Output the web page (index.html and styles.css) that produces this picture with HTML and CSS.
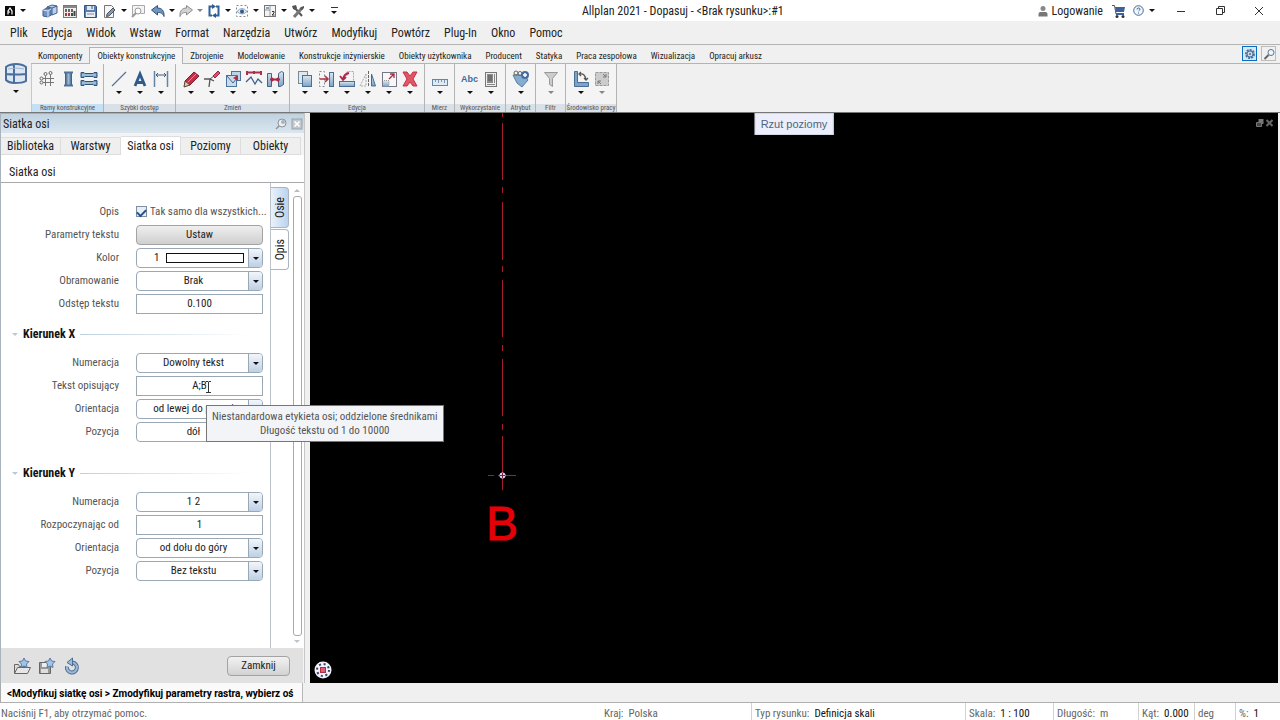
FILE: index.html
```html
<!DOCTYPE html>
<html lang="pl">
<head>
<meta charset="utf-8">
<title>Allplan 2021 - Dopasuj</title>
<link rel="stylesheet" href="styles.css">
</head>
<body>
<svg class="defs" aria-hidden="true">
  <defs>
    <linearGradient id="steel" x1="0" y1="0" x2="0" y2="1"><stop offset="0" stop-color="#dbe8f2"/><stop offset="1" stop-color="#7da3c4"/></linearGradient>
    <linearGradient id="deep" x1="0" y1="0" x2="1" y2="0"><stop offset="0" stop-color="#2f567f"/><stop offset=".5" stop-color="#9dbbd6"/><stop offset="1" stop-color="#2f567f"/></linearGradient>
  </defs>
</svg>

<header class="titlebar">
  <div class="quick">
    <button class="logo" aria-label="Allplan"><svg width="10" height="10"><rect width="10" height="10" fill="#0a0a0a"/><path d="M3 8.500V5l2-3 2 3v3.500M3.500 6H5" fill="none" stroke="#fff" stroke-width="1.200"/></svg><i class="car"></i></button>
    <button class="q first" aria-label="Projekt"><svg width="16" height="16"><path d="M5 4l5-2 5 1v7l-5 2-5-1z" fill="#b9d0e6" stroke="#3c5f92"/><path d="M5 4l5 1 5-2M10 5v7" fill="none" stroke="#3c5f92"/><path d="M1 7l4-2 4 1v6l-3 2-5-1z" fill="#6f93c4" stroke="#3c5f92"/><path d="M1 7l5 1 3-2M6 8v7" fill="none" stroke="#d5e3f2"/></svg></button>
    <button class="q" aria-label="Rysunki"><svg width="16" height="16"><rect x="1.500" y="2.500" width="13" height="12" fill="#eee" stroke="#777"/><path d="M2 4h12" stroke="#888" stroke-width="2"/><path d="M4 6v3M7 6v3M10 6v3" stroke="#666" stroke-width="2"/><path d="M4 10v3M7 10v3" stroke="#a33b3b" stroke-width="2"/><path d="M10 10v3M12.500 8v5" stroke="#444" stroke-width="2"/></svg></button>
    <button class="q" aria-label="Zapisz"><svg width="16" height="16"><path d="M2.500 2.500h11l1 1v11h-12z" fill="#5c80ab" stroke="#34547d"/><rect x="5" y="3" width="7" height="4" fill="#dce7f2"/><rect x="4" y="9" width="9" height="5" fill="#e8eef5"/><path d="M5 11h7" stroke="#88a"/><path d="M10 3v3" stroke="#34547d"/></svg></button>
    <button class="q wide" aria-label="Nowy"><svg width="16" height="16"><path d="M2.500 2.500h7l2 2v10h-9z" fill="#f6f6f6" stroke="#777"/><path d="M5 11l6-6 2 2-6 6-2.500.5z" fill="#7d9cc0" stroke="#333" stroke-width=".8"/></svg><i class="car"></i></button>
    <button class="q" aria-label="Podgląd"><svg width="16" height="16"><path d="M2.500 12.500v-10h12v8h-4" fill="#f4f4f4" stroke="#aaa"/><circle cx="8" cy="8" r="3" fill="#fff" stroke="#999"/><path d="M6 10l-4 4" stroke="#999" stroke-width="2"/></svg></button>
    <button class="q wide" aria-label="Cofnij"><svg width="16" height="16"><path d="M1.500 7l6-4.500V5c4 0 7 2.500 6.500 8.500-1.500-3.500-3-4-6.500-4v2.500z" fill="#6f94c0" stroke="#31547f"/></svg><i class="car"></i></button>
    <button class="q wide" aria-label="Ponów"><svg width="16" height="16"><path d="M14.500 7l-6-4.500V5c-4 0-7 2.500-6.500 8.500 1.500-3.500 3-4 6.500-4v2.500z" fill="#d2d2d2" stroke="#8c8c8c"/></svg><i class="car dim"></i></button>
    <button class="q wide" aria-label="Odśwież"><svg width="16" height="16"><path d="M6 3.500H3.500v9H6M10 3.500h2.500v9H10" fill="none" stroke="#2e6299" stroke-width="2"/><path d="M6 1l4 2.500L6 6zM10 10l-4 2.500 4 2.500z" fill="#2e5c91"/></svg><i class="car"></i></button>
    <button class="q wide" aria-label="Widoczność"><svg width="16" height="16"><rect x="2.500" y="2.500" width="11" height="11" fill="none" stroke="#888" stroke-dasharray="2 2"/><path d="M3 8.500q5-6 10 0q-5 5-10 0z" fill="#dfeaf5" stroke="#8ba6c3"/><circle cx="8" cy="8.500" r="2" fill="#2e578b"/></svg><i class="car"></i></button>
    <button class="q wide" aria-label="Okna"><svg width="16" height="16"><rect x="2.500" y="2.500" width="11" height="11" fill="#f3f3f3" stroke="#777"/><path d="M8 3v10M3 7h5" stroke="#999"/><path d="M4 4h3v2H4z" fill="#85a5c8"/><path d="M10 8.500h2v1.500l-2 2h2.500" fill="none" stroke="#333"/></svg><i class="car"></i></button>
    <button class="q wide" aria-label="Opcje"><svg width="16" height="16"><path d="M4 4l8 9" stroke="#555" stroke-width="2"/><path d="M2 3l4-1 1 3-2 2-2-1z" fill="#555"/><path d="M12 5l-8 9" stroke="#777" stroke-width="3"/><path d="M14 3l-3 1-1 2 2 1 2-2z" fill="#555"/></svg><i class="car"></i></button>
    <button class="q more" aria-label="Więcej"><span></span><i class="car"></i></button>
  </div>
  <div class="apptitle">Allplan 2021 - Dopasuj - &lt;Brak rysunku&gt;:#1</div>
  <div class="account">
    <button class="login"><svg width="10" height="12"><circle cx="5" cy="3.500" r="2.500" fill="#888"/><path d="M.5 11.500V9q0-2 2-2h5q2 0 2 2v2.500z" fill="#777"/></svg>Logowanie</button>
    <button aria-label="Sklep"><svg width="14" height="14"><path d="M0 1.500h2.500L4 10h8" fill="none" stroke="#555"/><path d="M3 3h10l-1 5H4z" fill="#3e619c"/><path d="M4 9h8v2H4z" fill="#3e619c"/><circle cx="5" cy="12.500" r="1.500" fill="#333"/><circle cx="11" cy="12.500" r="1.500" fill="#333"/></svg></button>
    <button class="help" aria-label="Pomoc"><svg width="11" height="11"><circle cx="5.500" cy="5.500" r="4.800" fill="#f2f7fc" stroke="#45699f"/><path d="M4 4.500q0-1.500 1.500-1.500t1.500 1.300q0 .7-1.500 1.700M5.500 7.500v1" fill="none" stroke="#365b93"/></svg><i class="car"></i></button>
  </div>
  <div class="winbtns">
    <button aria-label="Minimalizuj"><svg width="10" height="10"><path d="M1 5.500h8" stroke="#333"/></svg></button>
    <button aria-label="Przywróć"><svg width="10" height="10"><path d="M1.500 2.500h6v6h-6zM3.500 2.500v-2h6v6h-2" fill="none" stroke="#333"/></svg></button>
    <button aria-label="Zamknij okno"><svg width="10" height="10"><path d="M1 1l8 8M9 1l-8 8" stroke="#333"/></svg></button>
  </div>
</header>

<nav class="menubar">
  <button>Plik</button><button>Edycja</button><button>Widok</button><button>Wstaw</button><button>Format</button><button>Narzędzia</button><button>Utwórz</button><button>Modyfikuj</button><button>Powtórz</button><button>Plug-In</button><button>Okno</button><button>Pomoc</button>
</nav>

<section class="ribbon">
  <button class="role" aria-label="Rola"><svg width="24" height="24"><path d="M2 4l8-2 12 3v15H10l-8-2z" fill="#dce7f1"/><path d="M2 5q4-3 10-3t10 3v14q-3 2-12 2-5 0-8-3zM10 3v18M2 12q8 1 20 0" fill="none" stroke="#4a6f9e" stroke-width="2"/><path d="M4 7q8-2 16 0" fill="none" stroke="#9db6d0"/></svg><i class="car"></i></button>
  <div class="ribbon-body">
    <div class="tabs">
      <button>Komponenty</button><button class="on">Obiekty konstrukcyjne</button><button>Zbrojenie</button><button>Modelowanie</button><button>Konstrukcje inżynierskie</button><button>Obiekty użytkownika</button><button>Producent</button><button>Statyka</button><button>Praca zespołowa</button><button>Wizualizacja</button><button>Opracuj arkusz</button>
      <span class="tabtools">
        <button class="tool sel" aria-label="Konfiguruj"><svg width="12" height="12"><circle cx="6" cy="6" r="4" fill="#b9cfe3" stroke="#49719a" stroke-width="2" stroke-dasharray="2 1"/><circle cx="6" cy="6" r="3" fill="#c6d8e8" stroke="#49719a"/><circle cx="6" cy="6" r="1" fill="#49719a"/></svg></button>
        <button class="tool" aria-label="Szukaj"><svg width="12" height="12"><circle cx="8" cy="4.500" r="3" fill="#eef5fb" stroke="#55758f"/><path d="M5.500 7L1.500 11" stroke="#666" stroke-width="2"/></svg></button>
      </span>
    </div>
    <div class="groups">
      <div class="group hot"><div class="icons">
        <button aria-label="Siatka osi"><svg width="18" height="18"><path d="M7.500 6v10M12.500 3v13M5 8.500h11M5 12.500h11" stroke="#777" stroke-width="1"/><g fill="#f5f5f5" stroke="#666"><circle cx="7.500" cy="4" r="1.500"/><circle cx="12.500" cy="3" r="1.500"/><circle cx="3.500" cy="8.500" r="1.500"/><circle cx="3.500" cy="12.500" r="1.500"/></g></svg></button>
        <button aria-label="Słup"><svg width="18" height="18"><rect x="6" y="3" width="7" height="12" fill="url(#deep)"/><path d="M5 1.500h9v2H5zM5 14.500h9v2H5z" fill="#4f7399"/></svg></button>
        <button aria-label="Belka"><svg width="18" height="18"><g fill="#6f97bd" stroke="#2f5379"><path d="M1 2.500h3l1 1h8l1-1h3v5h-3l-1-1H5l-1 1H1z"/><path d="M1 10.500h3l1 1h8l1-1h3v5h-3l-1-1H5l-1 1H1z"/></g><path d="M2 5h14M2 13h14" stroke="#cfe0ee"/></svg></button>
      </div><div class="glabel">Ramy konstrukcyjne</div></div>
      <div class="group"><div class="icons">
        <button aria-label="Linia"><svg width="18" height="18"><path d="M2 16L16 2" stroke="#5a7396" stroke-width="1.300"/></svg><i class="car"></i></button>
        <button aria-label="Tekst"><svg width="18" height="18"><path d="M4 16L9 4l5 12M6 12.500h6" fill="none" stroke="#2f5a8c" stroke-width="2.800"/></svg><i class="car"></i></button>
        <button aria-label="Wymiar"><svg width="18" height="18"><path d="M2.500 1v16" stroke="#6385ab" stroke-width="1.500"/><path d="M15.500 1v16" stroke="#6385ab" stroke-width="1.500"/><path d="M4 5h10M6 3L4 5l2 2M12 3l2 2-2 2" fill="none" stroke="#445a78"/></svg><i class="car"></i></button>
      </div><div class="glabel">Szybki dostęp</div></div>
      <div class="group"><div class="icons">
        <button aria-label="Edytuj"><svg width="18" height="18"><path d="M12 2l5 4-9 9-5-4z" fill="#c22f48" stroke="#84182c"/><path d="M14 4L5 13" stroke="#ea8a99"/><path d="M3 11l5 4-6 2z" fill="#e6c79b" stroke="#50403b"/></svg><i class="car"></i></button>
        <button aria-label="Usuń fragment"><svg width="18" height="18"><path d="M1 9h6l4 2M7 9l-1 8" fill="none" stroke="#555" stroke-width="1.300"/><path d="M7 9l4-3" stroke="#555"/><path d="M10 6l5-5 2 2-5 5z" fill="#d2516a" stroke="#a02640"/></svg><i class="car"></i></button>
        <button aria-label="Punkty"><svg width="18" height="18"><rect x="7.500" y="1.500" width="9" height="9" fill="#bdd3e6" stroke="#4d7299"/><rect x="2.500" y="5.500" width="10" height="11" fill="#c9dcec" stroke="#4d7299"/><path d="M3 6l6 7 4-5" fill="none" stroke="#44658b"/><path d="M9 8l5-3v6z" fill="#b52a47"/></svg><i class="car"></i></button>
        <button aria-label="Polilinia"><svg width="18" height="18"><path d="M2 2.500h14" stroke="#aa3049" stroke-width="2"/><path d="M2 1v4M9 1v3M16 1v4" stroke="#aa3049" stroke-width="2"/><path d="M1 12l5-5 4 7 3-5 4 4" fill="none" stroke="#415f88" stroke-width="1.300"/></svg><i class="car"></i></button>
        <button aria-label="Połącz"><svg width="18" height="18"><path d="M1.500 3.500h4v13h-4zM12.500 3.500l3-2 2 1v12l-3 2h-2z" fill="url(#steel)" stroke="#416489"/><path d="M4 9.500h10" stroke="#ac2946" stroke-width="2"/><path d="M9 9.500l-4-3v6zM9 9.500l4-3v6z" fill="#ac2946"/></svg><i class="car"></i></button>
      </div><div class="glabel">Zmień</div></div>
      <div class="group"><div class="icons">
        <button aria-label="Kopiuj"><svg width="18" height="18"><rect x="2.500" y="1.500" width="9" height="12" fill="#e1e8ee" stroke="#7b8994"/><rect x="6.500" y="5.500" width="9" height="11" fill="url(#steel)" stroke="#4b7096"/></svg><i class="car"></i></button>
        <button aria-label="Przesuń"><svg width="18" height="18"><path d="M2.500 1.500h5v15h-5z" fill="none" stroke="#888" stroke-dasharray="2 2"/><rect x="12.500" y="2.500" width="4" height="14" fill="url(#steel)" stroke="#4a6e95"/><path d="M3 9h7M8 6l3 3-3 3" fill="none" stroke="#a9324a" stroke-width="1.500"/></svg><i class="car"></i></button>
        <button aria-label="Obróć"><svg width="18" height="18"><path d="M9 6V1.500h6.500V12" fill="none" stroke="#aaa" stroke-dasharray="2 1"/><path d="M11 3Q6 4 5 9M2 6l3 4 3-3" fill="none" stroke="#ac2946" stroke-width="1.800"/><rect x="1.500" y="11.500" width="15" height="5" fill="url(#steel)" stroke="#4a6e95"/></svg><i class="car"></i></button>
        <button aria-label="Lustro"><svg width="18" height="18"><path d="M7 4v12H1z" fill="none" stroke="#aaa" stroke-dasharray="2 1"/><path d="M9.500 1v16" stroke="#666" stroke-dasharray="3 1"/><path d="M12.500 4v12h4z" fill="url(#steel)" stroke="#456b94"/></svg><i class="car"></i></button>
        <button aria-label="Skaluj"><svg width="18" height="18"><rect x="2.500" y="2.500" width="14" height="14" fill="#f7f7f7" stroke="#778"/><path d="M3 10.500h6v6H3z" fill="url(#steel)"/><path d="M4 10.500h5v5" fill="none" stroke="#999" stroke-dasharray="1 1"/><path d="M9 9l5-5M10 4h4v4" fill="none" stroke="#ac2946" stroke-width="1.300"/></svg><i class="car"></i></button>
        <button aria-label="Usuń"><svg width="18" height="18"><path d="M2 2h4l3 4 3-4h4l-4 7 4 7h-4l-3-4-3 4H2l4-7z" fill="#df5666" stroke="#c93043"/></svg><i class="car"></i></button>
      </div><div class="glabel">Edycja</div></div>
      <div class="group"><div class="icons">
        <button aria-label="Mierz"><svg width="18" height="18"><rect x="1.500" y="9.500" width="15" height="6" fill="#dfeaf4" stroke="#6486a9"/><path d="M4.500 10v2M7.500 10v3M10.500 10v2M13.500 10v3" stroke="#7b98b3"/></svg><i class="car"></i></button>
      </div><div class="glabel">Mierz</div></div>
      <div class="group"><div class="icons">
        <button aria-label="Etykieta"><span class="abc">Abc</span><i class="car"></i></button>
        <button aria-label="Raport"><svg width="18" height="18"><rect x="3.500" y="2.500" width="11" height="14" fill="#eee" stroke="#777"/><rect x="5" y="4" width="6" height="9" fill="#8a8a8a"/><path d="M12.500 4v9M5 14.500h8" stroke="#888"/><path d="M6 6h4M6 8h4M6 10h4" stroke="#555"/></svg><i class="car"></i></button>
      </div><div class="glabel">Wykorzystanie</div></div>
      <div class="group"><div class="icons">
        <button aria-label="Atrybuty"><svg width="18" height="18"><path d="M1 5l4 8 5 4 6-7-3-4-5-1z" fill="#86acd0" stroke="#547da8"/><circle cx="4" cy="3" r="2" fill="none" stroke="#666"/><circle cx="8" cy="3.500" r="2" fill="none" stroke="#666"/><circle cx="13" cy="5" r="4" fill="#456fa2"/><path d="M13 3v4M11 5h4" stroke="#fff" stroke-width="1.500"/></svg><i class="car"></i></button>
      </div><div class="glabel">Atrybut</div></div>
      <div class="group"><div class="icons">
        <button aria-label="Filtr"><svg width="18" height="18"><path d="M2.500 2.500h13l-5 6v8l-3-2v-6z" fill="#ccc" stroke="#999"/></svg><i class="car dim"></i></button>
      </div><div class="glabel">Filtr</div></div>
      <div class="group"><div class="icons">
        <button aria-label="Układ"><svg width="18" height="18"><path d="M2.500 1.500h3v11h11v4h-14z" fill="#7fa3c6" stroke="#496d94"/><path d="M8 4q5-1 6 6M9 2L7 4l2 2M12 8l2 2 2-2" fill="none" stroke="#555" stroke-width="1.300"/></svg><i class="car"></i></button>
        <button aria-label="Zakres"><svg width="18" height="18"><rect x="2.500" y="2.500" width="13" height="13" fill="#ccc" stroke="#999" stroke-dasharray="3 1"/><path d="M10 4l3 3M13 4v3h-3M8 14l-3-3M5 14v-3h3" fill="none" stroke="#777"/></svg><i class="car dim"></i></button>
      </div><div class="glabel">Środowisko pracy</div></div>
    </div>
  </div>
</section>

<main class="work">
  <aside class="panel">
    <div class="phead"><span>Siatka osi</span>
      <button aria-label="Przypnij"><svg width="12" height="12"><circle cx="7" cy="5" r="4" fill="#eee" stroke="#8a929c"/><circle cx="8" cy="4" r="2" fill="#aab2bb"/><path d="M4 8l-3 3" stroke="#8a929c" stroke-width="1.500"/></svg></button>
      <button aria-label="Zamknij panel"><svg width="12" height="12"><rect x="1" y="1" width="10" height="10" fill="#c4c8cc" stroke="#9aa1a8"/><path d="M3.500 3.500l5 5M8.500 3.500l-5 5" stroke="#fff" stroke-width="1.600"/></svg></button>
    </div>
    <div class="ptabs"><button>Biblioteka</button><button>Warstwy</button><button class="on">Siatka osi</button><button>Poziomy</button><button>Obiekty</button></div>
    <h1 class="ptitle">Siatka osi</h1>
    <div class="pbody">
      <form class="props">
        <div class="row"><span class="lab">Opis</span><label class="check"><input type="checkbox" checked>Tak samo dla wszystkich...</label></div>
        <div class="row"><label for="ust">Parametry tekstu</label><button type="button" id="ust" class="push">Ustaw</button></div>
        <div class="row"><label for="kol">Kolor</label><span class="combo color"><select id="kol"><option>1</option></select><span class="swatch"></span></span></div>
        <div class="row"><label for="obr">Obramowanie</label><span class="combo"><select id="obr"><option>Brak</option></select></span></div>
        <div class="row"><label for="ods">Odstęp tekstu</label><input type="text" id="ods" value="0.100"></div>

        <h2>Kierunek X</h2>
        <div class="row"><label for="nx">Numeracja</label><span class="combo"><select id="nx"><option>Dowolny tekst</option></select></span></div>
        <div class="row tiphost"><label for="tx">Tekst opisujący</label><input type="text" id="tx" value="A;B">
          <svg class="ibeam" width="5" height="12"><path d="M0 .5h2l.5.500.500-.5h2M2.500 1v10M0 11.500h5" fill="none" stroke="#333"/></svg>
          <div class="tip" role="tooltip">Niestandardowa etykieta osi; oddzielone średnikami<br>Długość tekstu od 1 do 10000</div>
        </div>
        <div class="row"><label for="ox">Orientacja</label><span class="combo"><select id="ox"><option>od lewej do prawej</option></select></span></div>
        <div class="row"><label for="px">Pozycja</label><span class="combo"><select id="px"><option>dół</option></select></span></div>

        <h2 class="apart">Kierunek Y</h2>
        <div class="row"><label for="ny">Numeracja</label><span class="combo"><select id="ny"><option>1 2</option></select></span></div>
        <div class="row"><label for="ry">Rozpoczynając od</label><input type="text" id="ry" value="1"></div>
        <div class="row"><label for="oy">Orientacja</label><span class="combo"><select id="oy"><option>od dołu do góry</option></select></span></div>
        <div class="row"><label for="py">Pozycja</label><span class="combo"><select id="py"><option>Bez tekstu</option></select></span></div>
      </form>
      <div class="sidetabs"><button class="osie"><span>Osie</span></button><button><span>Opis</span></button></div>
      <div class="scroll"><i class="up"></i><div class="thumb"></div><i class="down"></i></div>
    </div>
    <footer class="pfoot">
      <button aria-label="Wczytaj"><svg width="18" height="18"><path d="M1.500 16.500v-9h4l1 2h7v2" fill="#ddd" stroke="#666"/><path d="M1.500 16.500l3-6h13l-3 6z" fill="#e6e6e6" stroke="#666"/><path d="M11 1l1.500 3 3.500.5-2.500 2.500.5 3.500-3-1.500-3 1.500.5-3.500L6 4.500 9.500 4z" fill="#a4c4e6" stroke="#547aa6"/></svg></button>
      <button aria-label="Zapisz jako ulubione"><svg width="18" height="18"><path d="M1.500 5.500h11v11h-11z" fill="#999" stroke="#666"/><rect x="4" y="6" width="5" height="4" fill="#eee"/><rect x="3" y="12" width="7" height="4" fill="#ddd"/><path d="M12 1l1.500 3 3.500.5-2.500 2.500.5 3.500-3-1.500-3 1.500.5-3.500L7 4.500 10.500 4z" fill="#a4c4e6" stroke="#547aa6"/></svg></button>
      <button aria-label="Przywróć"><svg width="18" height="18"><path d="M9 5.500a5 5 0 1 1-5 4" fill="none" stroke="#4c6d92" stroke-width="4"/><path d="M9 5.500a5 5 0 1 1-5 4" fill="none" stroke="#9dbbd9" stroke-width="2"/><path d="M9.500 1v8L4 5.500z" fill="#9dbbd9" stroke="#4c6d92"/></svg></button>
      <button class="push close">Zamknij</button>
    </footer>
  </aside>
  <section class="viewport">
    <svg class="drawing" width="100%" height="100%">
      <path d="M192.500 377V323M192.500 317v-6M192.500 303v-57M192.500 238v-6M192.500 224v-57M192.500 159v-6M192.500 147V89M192.500 80v-6M192.500 67V10M192.500 4V0" stroke="#a51d2c" fill="none"/>
      <path d="M178 362.500h6M188 362.500h18" stroke="#a51d2c"/>
      <circle cx="192.500" cy="362.500" r="3" fill="#d9d5ef"/><path d="M192.500 360v5M190 362.500h5" stroke="#7b1f4d"/>
      <text class="axis" x="192" y="427">B</text>
    </svg>
    <div class="viewname">Rzut poziomy</div>
    <div class="viewbtns"><button aria-label="Przywróć widok"><svg width="8" height="8"><path d="M2.500 0h5v5h-5z" fill="#777"/><path d="M.5 3.500h5v4h-5z" fill="#444" stroke="#777"/></svg></button><button aria-label="Zamknij widok"><svg width="7" height="8"><path d="M.5 1l6 6M6.500 1l-6 6" stroke="#666" stroke-width="2"/></svg></button></div>
    <button class="wheel" aria-label="Asystent"><svg width="18" height="18"><circle cx="9" cy="9" r="8.500" fill="#f4f4f8"/><circle cx="9" cy="9" r="6" fill="none" stroke="#34446e" stroke-width="2" stroke-dasharray="2 2.700"/><rect x="6.500" y="6.500" width="5" height="5" fill="#d96075" stroke="#b52a47"/></svg></button>
  </section>
</main>

<div class="cmdrow"><div class="cmd">&lt;Modyfikuj siatkę osi &gt; Zmodyfikuj parametry rastra, wybierz oś</div></div>
<footer class="status">
  <span class="hint">Naciśnij F1, aby otrzymać pomoc.</span>
  <span class="cell c1">Kraj:<span>Polska</span></span>
  <span class="cell c2">Typ rysunku:<b>Definicja skali</b></span>
  <span class="cell c3">Skala:<b>1 : 100</b></span>
  <span class="cell c4">Długość:<span>m</span></span>
  <span class="cell c5">Kąt:<b>0.000</b></span>
  <span class="cell c6">deg</span>
  <span class="cell c7">%:<b>1</b></span>
</footer>
</body>
</html>
```
FILE: styles.css
```css
* { box-sizing: border-box; }
:root { --ui: "Roboto Condensed", "Roboto", sans-serif; }
body {
  margin: 0;
  height: 100vh;
  display: flex;
  flex-direction: column;
  background: #f0f0f0;
  color: #222;
  font: 11px/16px var(--ui);
  overflow: hidden;
}
button, input, select { font: inherit; color: inherit; margin: 0; }
button { padding: 0; border: 0; background: none; white-space: nowrap; }
svg { display: block; flex: none; }
.defs { position: absolute; width: 0; height: 0; }
.car { display: inline-block; border: 3px solid transparent; border-top: 3px solid #111; border-bottom: 0; }
.car.dim { border-top-color: #888; }

/* Title bar */
.titlebar { display: flex; align-items: center; height: 21px; background: #fff; font-size: 12px; }
.quick { display: flex; align-items: center; height: 20px; }
.quick button { display: flex; align-items: center; gap: 3px; }
.quick .logo { padding-left: 5px; gap: 5px; }
.q { width: 20px; }
.q.wide { width: 28px; }
.q.first { margin-left: 16px; }
.q.more { flex-direction: column; margin-left: 6px; }
.q.more span { width: 7px; height: 1px; background: #333; }
.apptitle { flex: 1; text-align: center; padding-right: 16px; }
.account { display: flex; align-items: center; gap: 7px; padding-right: 6px; height: 18px; }
.login, .help { display: flex; align-items: center; gap: 4px; }
.login { margin-right: 2px; }
.help { gap: 5px; }
.winbtns { display: flex; padding-right: 2px; }
.winbtns button { width: 39px; display: flex; justify-content: center; }

/* Menu */
.menubar { display: flex; height: 24px; padding: 0 3px; border-bottom: 1px solid #b4b4b4; font-size: 12px; }
.menubar button { padding: 0 7px; }

/* Ribbon */
.ribbon { display: flex; height: 68px; border-bottom: 1px solid #777; }
.role { width: 31px; display: flex; flex-direction: column; align-items: center; gap: 4px; padding-top: 17px; }
.ribbon-body { flex: 1; min-width: 0; }
.tabs { display: flex; align-items: flex-end; height: 19px; border-bottom: 1px solid #b4b4b4; font-size: 9px; line-height: 14px; }
.tabs > button { height: 15px; padding: 0 7px; }
.tabs > button.on { height: 17px; margin-bottom: -1px; border: 1px solid #b4b4b4; border-bottom: 0; background: #f5f5f5; }
.tabtools { margin-left: auto; display: flex; gap: 4px; padding: 0 4px 2px 0; }
.tool { width: 15px; height: 15px; border: 1px solid #bbb; display: flex; align-items: center; justify-content: center; }
.tool.sel { border: 1px solid #0b6cc0; background: #d5e8f7; }
.groups { display: flex; height: 48px; }
.group { display: flex; flex-direction: column; border-right: 1px solid #b4b4b4; }
.icons { flex: 1; display: flex; padding: 6px 4px 0; background: #f4f4f4; }
.group.hot { border-left: 1px solid #c8c8c8; }
.icons button { width: 21px; display: flex; flex-direction: column; align-items: center; justify-content: flex-start; gap: 3px; }
.abc { font: bold 9px/18px "Liberation Sans", sans-serif; color: #3f6ba3; }
.glabel { contain: inline-size; height: 8px; background: #d9e0e7; color: #555; font-size: 7px; line-height: 8px; text-align: center; white-space: nowrap; }
.hot .glabel { background: #c5e0f5; }

/* Workspace */
.work { flex: 1; min-height: 0; display: flex; }
.panel { width: 305px; margin-right: 5px; display: flex; flex-direction: column; background: #f4f4f4; border-left: 1px solid #aab4be; border-right: 1px solid #c6c6c6; }
.phead { display: flex; align-items: center; gap: 4px; height: 20px; padding: 0 1px 0 2px; background: linear-gradient(#c0d2e0, #dae6ef); border-top: 1px solid #a4b0ba; font-size: 12px; }
.phead span { flex: 1; }
.ptabs { display: flex; align-items: flex-end; height: 22px; font-size: 12px; }
.ptabs button { flex: 1; height: 18px; background: #efefef; border: 1px solid #ddd; border-left: 0; }
.ptabs button.on { height: 19px; background: #fff; border-bottom: 0; }
.ptabs button:last-child { margin-right: 3px; }
.ptitle { margin: 0; padding: 9px 8px 2px; height: 28px; background: #fff; border-bottom: 1px solid #a9a9a9; font-size: 12px; font-weight: 400; }
.pbody { flex: 1; min-height: 0; display: flex; background: #fff; }
.props { width: 270px; padding-top: 17px; border-right: 1px solid #bcc3ca; }
.row { display: grid; grid-template-columns: 118px 127px; column-gap: 17px; align-items: center; height: 23px; }
.row > label, .row > .lab { text-align: right; color: #555; }
.row > label.check { display: flex; align-items: center; gap: 3px; text-align: left; white-space: nowrap; }
.check input { appearance: none; width: 11px; height: 11px; border: 1px solid #7f8ea3; background: #e6eef7; display: grid; place-content: center; }
.check input:checked::before { content: ""; width: 7px; height: 4px; border: solid #2a5288; border-width: 0 0 2px 2px; transform: rotate(-45deg); }
.row input[type="text"], .row select, .push { width: 100%; height: 20px; border: 1px solid #9aa8b5; background: #fff; text-align: center; text-align-last: center; padding: 0; }
.row .push, .push.close { border-radius: 4px; background: linear-gradient(#efefef, #cfcfcf); border-color: #a3a3a3; }
.combo { position: relative; display: block; height: 20px; }
.row select { appearance: none; border-radius: 4px; padding-right: 12px; display: block; }
.combo::after { content: ""; position: absolute; right: 1px; top: 1px; width: 13px; height: 18px; border-left: 1px solid #9aa8b5; border-radius: 0 3px 3px 0; background: linear-gradient(#f2f6fa, #bdd0e6); pointer-events: none; }
.combo::before { content: ""; position: absolute; z-index: 1; right: 4px; top: 9px; border: 3px solid transparent; border-top-color: #111; border-bottom: 0; pointer-events: none; }
.row .color select { text-align: left; text-align-last: left; padding-left: 17px; }
.swatch { position: absolute; left: 30px; right: 19px; top: 5px; bottom: 5px; border: 1px solid #111; background: #fff; pointer-events: none; }
.props h2 { display: flex; align-items: center; gap: 5px; height: 18px; margin: 10px 20px 8px 11px; font-size: 12px; line-height: 16px; font-weight: 700; color: #111; }
.props h2::before { content: ""; border: 3px solid transparent; border-top-color: #b7c9da; border-bottom: 0; }
.props h2::after { content: ""; flex: 1; height: 1px; background: linear-gradient(90deg, #bdd0df, #fff); }
.props h2.apart { margin-top: 21px; }
.tiphost { position: relative; }
.ibeam { position: absolute; left: 205px; top: 7px; }
.tip { position: absolute; z-index: 5; left: 205px; top: 31px; padding: 4px 5px 3px; border: 1px solid #767676; background: #f2f4f8; color: #555; line-height: 14px; text-align: center; white-space: nowrap; }
.sidetabs { width: 19px; padding-top: 4px; }
.sidetabs button { width: 18px; height: 41px; border: 1px solid #a9b5c3; border-left: 0; border-radius: 0 4px 4px 0; background: #fff; display: flex; justify-content: center; align-items: center; margin-bottom: 1px; font-size: 12px; }
.sidetabs .osie { background: linear-gradient(90deg, #eaf2fb, #bcd3ee); }
.sidetabs span { writing-mode: vertical-rl; transform: rotate(180deg); }
.scroll { flex: 1; display: flex; flex-direction: column; align-items: center; gap: 4px; padding: 6px 0 5px; }
.scroll .thumb { width: 9px; flex: 1; border: 1px solid #a8a8a8; border-radius: 3px; background: #fff; }
.up, .down { border: 3px solid transparent; }
.up { border-bottom-color: #bbb; border-top: 0; }
.down { border-top-color: #bcc5cd; border-bottom: 0; }
.pfoot { display: flex; align-items: center; gap: 7px; height: 35px; padding: 0 13px 0 12px; margin-right: 1px; background: #e1e1e1; }
.push.close { width: 63px; margin-left: auto; background: linear-gradient(#f2f2f2, #d2d2d2); }

/* Drawing viewport */
.viewport { position: relative; flex: 1; margin-right: 2px; background: #000; overflow: hidden; }
.drawing { position: absolute; inset: 0; }
.axis { font: 48px "Liberation Sans", sans-serif; fill: #e60008; stroke: #e60008; stroke-width: 1px; text-anchor: middle; }
.viewname { position: absolute; top: 0; left: 50%; transform: translateX(-50%); padding: 1px 5px; background: #eceffb; border: 1px solid #d3d8e6; color: #4d6480; font: 11px/18px "Liberation Sans", sans-serif; }
.viewbtns { position: absolute; right: 5px; top: 6px; display: flex; gap: 2px; }
.wheel { position: absolute; left: 4px; bottom: 4px; }

/* Command and status rows */
.cmdrow { display: flex; height: 20px; border-bottom: 1px solid #b0b0b0; }
.cmd { width: 303px; padding-left: 6px; border-left: 1px solid #aaa; border-right: 1px solid #b8b8b8; background: #fafafa; color: #000; font: 700 10px/21px "Roboto", sans-serif; white-space: nowrap; overflow: hidden; }
.status { display: flex; height: 17px; background: #fff; color: #666; white-space: nowrap; line-height: 22px; }
.hint { flex: 1; padding-left: 1px; }
.cell { display: flex; gap: 5px; padding-left: 3px; border-left: 1px solid #d2d2d2; }
.cell b { font-weight: 400; color: #111; }
.c1 { width: 150px; border-left: 0; }
.c2 { width: 214px; }
.c3 { width: 88px; }
.c4 { width: 85px; }
.c5 { width: 56px; }
.c6 { width: 41px; }
.c7 { width: 45px; }
```
